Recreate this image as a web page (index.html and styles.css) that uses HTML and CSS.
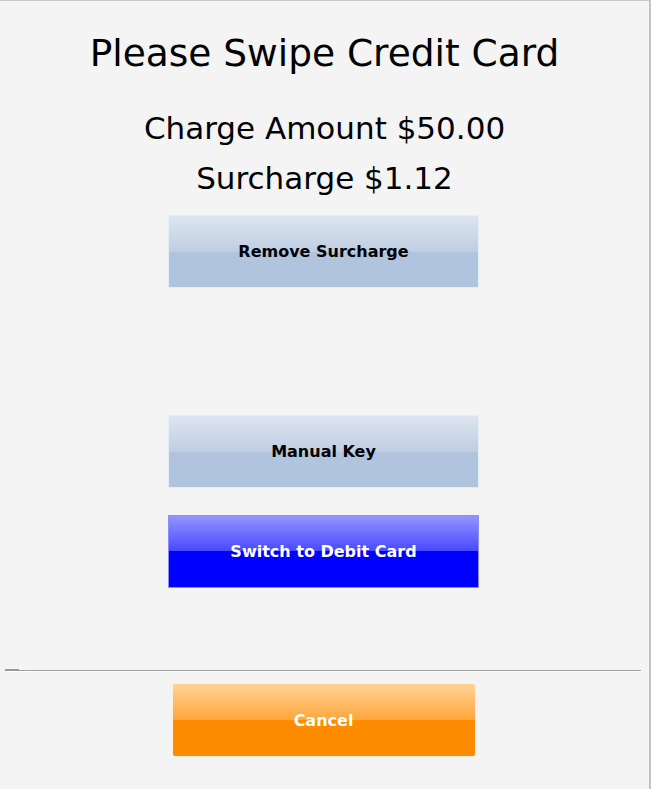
FILE: index.html
```html
<!DOCTYPE html>
<html lang="en">
<head>
    <meta charset="UTF-8">
    <title>Swipe Card</title>
    <link rel="stylesheet" href="styles.css">
</head>
<body>
    <div class="screen">
        <h1 class="title">Please Swipe Credit Card</h1>

        <div class="amounts">
            <div class="amount">Charge Amount $50.00</div>
            <div class="amount">Surcharge $1.12</div>
        </div>

        <div class="actions">
            <button class="btn btn-steel">Remove Surcharge</button>
            <div class="spacer"></div>
            <button class="btn btn-steel">Manual Key</button>
            <button class="btn btn-blue">Switch to Debit Card</button>
        </div>

        <div class="footer">
            <div class="divider"><span class="divider-grip"></span></div>
            <button class="btn btn-orange">Cancel</button>
        </div>
    </div>
</body>
</html>
```

FILE: styles.css
```css
body {
    margin: 0;
    font-family: "DejaVu Sans", Verdana, sans-serif;
}

.screen {
    width: 651px;
    height: 789px;
    box-sizing: border-box;
    background: #f4f4f4;
    border-top: 1px solid #c9c9c9;
    border-right: 2px solid #c3c3c3;
    display: flex;
    flex-direction: column;
    align-items: center;
}

.title {
    margin: 29px 0 0;
    font-size: 37.5px;
    font-weight: normal;
    line-height: 46px;
    color: #000;
}

.amounts {
    margin-top: 27px;
    display: flex;
    flex-direction: column;
    align-items: center;
}

.amount {
    font-size: 31px;
    line-height: 50px;
    color: #000;
}

.actions {
    margin: 12px 2px 0 0;
    display: flex;
    flex-direction: column;
    align-items: center;
    gap: 27px;
}

.spacer {
    height: 73px;
}

.btn {
    width: 311px;
    height: 73px;
    border: 1px solid #e4eef8;
    font-family: inherit;
    font-size: 16px;
    font-weight: bold;
    padding: 0;
    cursor: pointer;
}

.btn-steel {
    color: #000;
    background: linear-gradient(#dde5f0, #bfcee2 50%, #b0c4de 50%, #b0c4de);
}

.btn-blue {
    color: #fff;
    border-color: #8c8cff;
    background: linear-gradient(#9494ff, #4848ff 50%, #0000ff 50%, #0000ff);
}

.footer {
    margin-top: auto;
    width: 100%;
    padding-bottom: 32px;
    display: flex;
    flex-direction: column;
    align-items: center;
}

.divider {
    position: relative;
    width: 636px;
    margin-left: -3px;
    height: 1px;
    background: #9aa0a4;
    border-bottom: 1px solid #fff;
}

.divider-grip {
    position: absolute;
    left: 0;
    top: -1px;
    width: 14px;
    height: 2px;
    background: #999;
}

.btn-orange {
    margin: 11px 2px 0 0;
    width: 304px;
    height: 74px;
    color: #fff;
    border-color: #fff0dc;
    border-radius: 3px;
    background: linear-gradient(#ffd496, #ffa63c 50%, #ff8c00 50%, #ff8c00);
}
```
